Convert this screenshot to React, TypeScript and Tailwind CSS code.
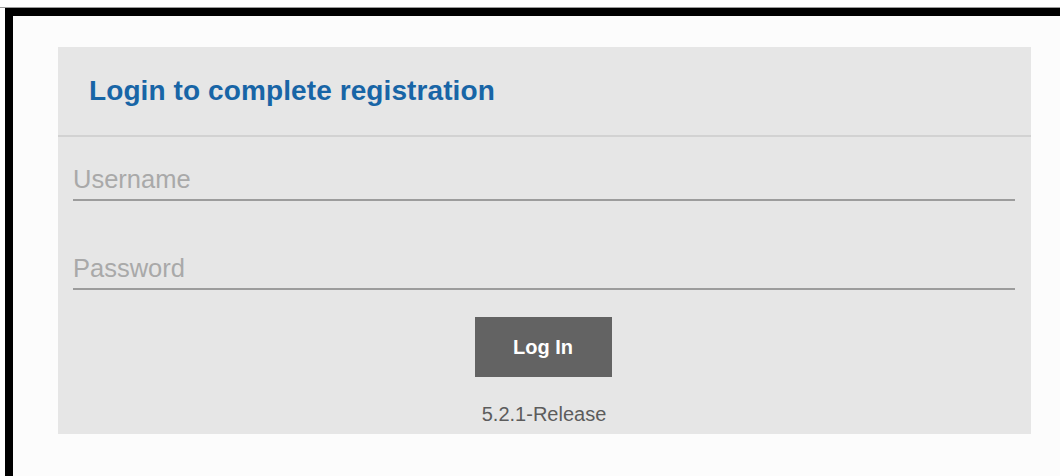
import React from 'react';

const App: React.FC = () => {
  return (
    <div className="w-[1060px] h-[476px] overflow-hidden bg-white pt-[7px] font-['Liberation_Sans',Arial,sans-serif]">
      {/* window frame: thin grey rule, then the black band on top and left */}
      <div className="border-t border-[#9a9a9a] pl-[5px]">
        <div className="h-[468px] border-t-[8px] border-l-[8px] border-black bg-[#fcfcfc] pt-[31px] pl-[45px]">
          <section className="w-[973px] h-[387px] bg-[#e6e6e6] flex flex-col">
            <header className="h-[90px] shrink-0 flex items-center pl-[31px] border-b-2 border-[#d2d2d2]">
              <h1 className="text-[28px] tracking-[0.1px] font-bold text-[#1865a6] leading-none">
                Login to complete registration
              </h1>
            </header>

            <form className="flex flex-col px-[15px] pr-[16px]" onSubmit={(e) => e.preventDefault()}>
              <input
                type="text"
                placeholder="Username"
                className="mt-[26px] h-[38px] pb-[4px] w-full bg-transparent text-[25.5px] text-[#444] placeholder:text-[#a9a9a9] border-b-2 border-[#9c9c9c] outline-none"
              />
              <input
                type="password"
                placeholder="Password"
                className="mt-[51px] h-[38px] pb-[4px] w-full bg-transparent text-[25.5px] text-[#444] placeholder:text-[#a9a9a9] border-b-2 border-[#9c9c9c] outline-none"
              />
              <button
                type="submit"
                className="mt-[27px] mr-[2px] self-center w-[137px] h-[60px] bg-[#636363] text-white text-[20px] font-bold"
              >
                Log In
              </button>
              <p className="mt-[25px] text-center text-[20px] leading-[24px] text-[#5c5c5c]">
                5.2.1-Release
              </p>
            </form>
          </section>
        </div>
      </div>
    </div>
  );
};

export default App;
